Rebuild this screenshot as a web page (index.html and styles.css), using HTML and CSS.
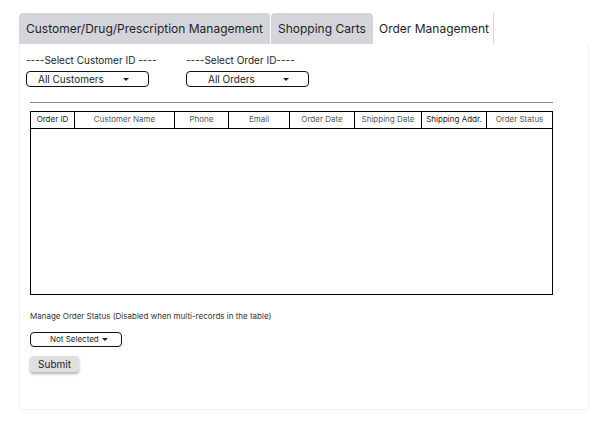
FILE: index.html
```html
<!DOCTYPE html>
<html>
<head>
<meta charset="utf-8">
<link rel="stylesheet" href="styles.css">
</head>
<body>
<div class="app">
  <div class="tabs">
    <div class="tab">Customer/Drug/Prescription Management</div>
    <div class="tab">Shopping Carts</div>
    <div class="tab active">Order Management</div>
  </div>
  <div class="panel">
    <div class="filters">
      <div class="filter">
        <div class="flabel">----Select Customer ID ----</div>
        <div class="select"><span>All Customers</span><span class="caret"></span></div>
      </div>
      <div class="filter">
        <div class="flabel">----Select Order ID----</div>
        <div class="select center"><span>All Orders</span><span class="caret"></span></div>
      </div>
    </div>
    <div class="content">
      <hr class="rule">
      <div class="table">
        <div class="thead">
          <div class="th w1 dark">Order ID</div>
          <div class="th w2">Customer Name</div>
          <div class="th w3">Phone</div>
          <div class="th w4">Email</div>
          <div class="th w5">Order Date</div>
          <div class="th w6">Shipping Date</div>
          <div class="th w7 dark">Shipping Addr.</div>
          <div class="th w8">Order Status</div>
        </div>
        <div class="tbody"></div>
      </div>
      <div class="manage">Manage Order Status (Disabled when multi-records in the table)</div>
      <div class="status-select"><span>Not Selected</span><span class="caret small"></span></div>
      <button class="submit">Submit</button>
    </div>
  </div>
</div>
</body>
</html>
```
FILE: styles.css
```css
html, body { margin: 0; padding: 0; background: #fff; }
body { font-family: Inter, "Noto Sans", sans-serif; color: #222; }
.app { padding: 13px 19px 0 19px; width: 570px; }
.tabs { display: flex; height: 31px; }
.tab {
  background: #d3d5da;
  font-size: 12px;
  line-height: 31px;
  padding: 0 7px;
  margin-right: 1px;
  border-radius: 4px 4px 0 0;
  color: #1f1f1f;
  white-space: nowrap;
}
.tab:first-child { width: 237px; }
.tab:nth-child(2) { width: 88px; }
.tab.active {
  background: #fff;
  border-right: 1px solid #d8d8d8;
  border-radius: 0;
  width: 114px;
  padding-left: 5px;
  padding-right: 0;
}
.panel {
  height: 366px;
  border: 1px solid #efefef;
  border-top: none;
  border-radius: 0 0 4px 4px;
  box-sizing: border-box;
}
.filters { display: flex; padding: 9px 0 0 6px; }
.filter { width: 160px; }
.flabel { font-size: 10px; line-height: 14px; color: #222; }
.select {
  margin-top: 4px;
  width: 123px;
  height: 16px;
  box-sizing: border-box;
  border: 1px solid #111;
  border-radius: 4px;
  font-size: 10px;
  line-height: 14px;
  display: flex;
  align-items: center;
  padding: 0 0 0 11px;
  position: relative;
}
.select.center { padding-left: 21px; }
.caret {
  position: absolute;
  right: 19px;
  top: 6px;
  width: 0; height: 0;
  border-left: 3.5px solid transparent;
  border-right: 3.5px solid transparent;
  border-top: 3px solid #222;
}
.content { padding: 0 0 0 10px; }
.rule {
  margin: 15px 0 0 0;
  width: 523px;
  border: none;
  border-top: 1px solid #8a8a8a;
  height: 0;
}
.table {
  margin-top: 8px;
  width: 523px;
  height: 184px;
  border: 1px solid #000;
  box-sizing: border-box;
  display: flex;
  flex-direction: column;
}
.thead { display: flex; height: 16px; border-bottom: 1px solid #000; }
.th {
  font-size: 8px;
  line-height: 15px;
  text-align: center;
  color: #555;
  border-right: 1px solid #000;
  box-sizing: border-box;
}
.th.dark { color: #1a1a1a; }
.th:last-child { border-right: none; }
.w1 { width: 44px; }
.w2 { width: 100px; }
.w3 { width: 54px; }
.w4 { width: 61px; }
.w5 { width: 65px; }
.w6 { width: 67px; }
.w7 { width: 65px; }
.w8 { flex: 1; }
.manage { margin-top: 16px; font-size: 8px; line-height: 10px; color: #333; }
.status-select {
  margin-top: 11px;
  width: 92px;
  height: 15px;
  box-sizing: border-box;
  border: 1px solid #111;
  border-radius: 4px;
  font-size: 8px;
  line-height: 13px;
  padding-left: 19px;
  display: flex;
  align-items: center;
  gap: 3px;
}
.caret.small {
  position: static;
  border-left-width: 3px;
  border-right-width: 3px;
  border-top-width: 3px;
}
.submit {
  display: block;
  margin-top: 9px;
  width: 49px;
  height: 16px;
  padding: 0;
  border: none;
  border-radius: 3px;
  background: #e0e0e0;
  box-shadow: 0 2px 3px rgba(0,0,0,0.3);
  font-family: Inter, sans-serif;
  font-size: 10px;
  line-height: 16px;
  color: #222;
}
```
